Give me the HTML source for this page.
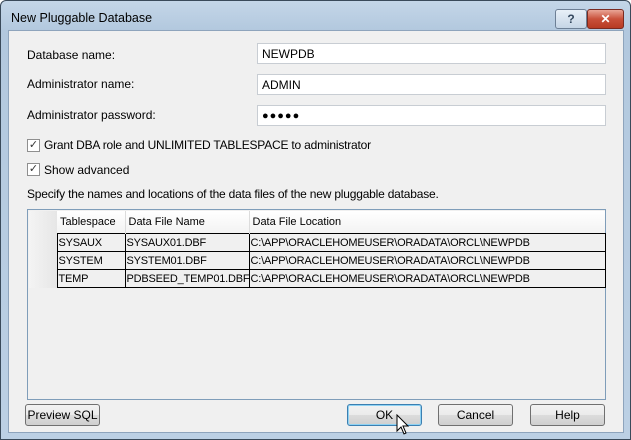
<!DOCTYPE html><html><head><style>
body{margin:0;width:631px;height:440px;overflow:hidden;font-family:"Liberation Sans",sans-serif;font-size:12px;color:#000}
.frame{position:absolute;left:0;top:0;width:629px;height:438px;border:1px solid #3a4a5a;border-radius:6px 6px 0 0;background:linear-gradient(#c4d6e8,#b2c8de 30px,#bcd0e4)}
.content{position:absolute;left:8px;top:30px;width:614px;height:401px;background:#f0f0f0;border:1px solid #8ea4bc}
.a{position:absolute;white-space:nowrap}
.tf{position:absolute;left:257px;height:21px;background:#fff;border:1px solid #c8cdd3;font-size:12px;line-height:21px;padding-left:4px;box-sizing:border-box;width:349px}
.cb{position:absolute;width:11px;height:11px;border:1px solid #8f8f8f;background:#fff;font-size:11px;line-height:11px;text-align:center;color:#333}
.btn{position:absolute;height:22px;border:1px solid #707070;border-radius:3px;background:linear-gradient(#f2f2f2,#ebebeb 50%,#dcdcdc 51%,#cfcfcf);text-align:center;line-height:21px;box-sizing:border-box}
table{border-collapse:collapse;position:absolute;left:29px;top:211px;font-size:11px;table-layout:fixed;width:576px}
td{height:17px;padding:0 1px;border:1px solid #000;white-space:nowrap;overflow:hidden;letter-spacing:-0.2px}
th{font-weight:normal;text-align:left;height:22px;padding:0 3px;border-right:1px solid #dcdcdc;background:linear-gradient(#fff,#f3f3f3);white-space:nowrap;overflow:hidden}
.rh{border:none !important;background:linear-gradient(90deg,#f4f4f4,#e6e6e6)}
</style></head><body>
<div class="frame"></div>
<div class="a" style="left:11px;top:11px;font-size:12.5px">New Pluggable Database</div>
<div style="position:absolute;left:555px;top:9px;width:30px;height:18px;border:1px solid #6d7f95;border-radius:3px;background:linear-gradient(#e8f0f8,#c5d5e6);text-align:center;font-weight:bold;color:#33475e;line-height:18px">?</div>
<div style="position:absolute;left:587px;top:9px;width:35px;height:18px;border:1px solid #7a2a20;border-radius:3px;background:linear-gradient(#e9a596,#c9503a 50%,#b73a22);text-align:center;font-weight:bold;color:#fff;line-height:18px">✕</div>
<div class="content"></div>
<div class="a" style="left:27px;top:48px">Database name:</div>
<div class="a" style="left:27px;top:77px">Administrator name:</div>
<div class="a" style="left:27px;top:108px">Administrator password:</div>
<div class="tf" style="top:43px">NEWPDB</div>
<div class="tf" style="top:74px">ADMIN</div>
<div class="tf" style="top:105px;letter-spacing:1px;font-size:11px">●●●●●</div>
<div class="cb" style="left:27px;top:139px">✓</div><div class="a" style="left:44px;top:138px;letter-spacing:-0.2px">Grant DBA role and UNLIMITED TABLESPACE to administrator</div>
<div class="cb" style="left:27px;top:163px">✓</div><div class="a" style="left:44px;top:163px">Show advanced</div>
<div class="a" style="left:27px;top:187px;letter-spacing:-0.2px">Specify the names and locations of the data files of the new pluggable database.</div>
<div style="position:absolute;left:27px;top:209px;width:577px;height:189px;border:1px solid #7f9db9;background:#f0f0f0"></div>
<table>
<colgroup><col style="width:28px"><col style="width:68px"><col style="width:124px"><col style="width:356px"></colgroup>
<tr><th class="rh"></th><th>Tablespace</th><th>Data File Name</th><th style="border-right:none">Data File Location</th></tr>
<tr><td class="rh"></td><td>SYSAUX</td><td>SYSAUX01.DBF</td><td>C:\APP\ORACLEHOMEUSER\ORADATA\ORCL\NEWPDB</td></tr>
<tr><td class="rh"></td><td>SYSTEM</td><td>SYSTEM01.DBF</td><td>C:\APP\ORACLEHOMEUSER\ORADATA\ORCL\NEWPDB</td></tr>
<tr><td class="rh"></td><td>TEMP</td><td>PDBSEED_TEMP01.DBF</td><td>C:\APP\ORACLEHOMEUSER\ORADATA\ORCL\NEWPDB</td></tr>
</table>
<div class="btn" style="left:25px;top:404px;width:75px">Preview SQL</div>
<div class="btn" style="left:347px;top:404px;width:75px;border-color:#3c7fb1;box-shadow:inset 0 0 0 1px #8ed2f3">OK</div>
<div class="btn" style="left:438px;top:404px;width:75px">Cancel</div>
<div class="btn" style="left:530px;top:404px;width:75px">Help</div>
<svg style="position:absolute;left:396px;top:414px" width="16" height="24"><path d="M1 1 L1 17 L5 13 L8 20 L10 19 L7 12 L12 12 Z" fill="#fff" stroke="#000" stroke-width="1"/></svg>
</body></html>
